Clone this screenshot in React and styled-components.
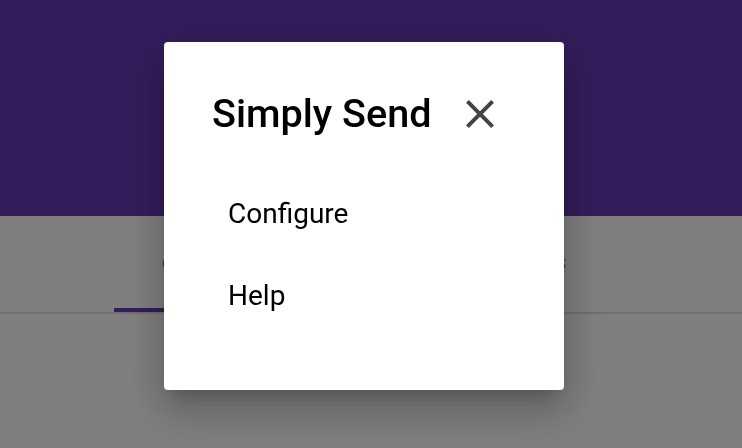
import styled, { createGlobalStyle } from 'styled-components';

const GlobalStyle = createGlobalStyle`
    body {
        margin: 0;
        font-family: Roboto, "Liberation Sans", sans-serif;
        background: #ffffff;
    }
`;

const Page = styled.div`
    position: relative;
    min-height: 100vh;
    background: #ffffff;
`;

const Header = styled.header`
    height: 216px;
    background: #6a38b6;
`;

const TabBar = styled.nav`
    display: flex;
    height: 96px;
    padding-left: 114px;
    border-bottom: 2px solid #dedede;
`;

const Tab = styled.div`
    width: ${(p) => p.width}px;
    display: flex;
    align-items: center;
    justify-content: center;
    font-size: 15px;
    font-weight: 500;
    letter-spacing: 0.5px;
    color: #757575;
    border-bottom: 4px solid ${(p) => (p.active ? '#6a38b6' : 'transparent')};
    box-sizing: border-box;
    padding-top: 4px;
`;

const Backdrop = styled.div`
    position: fixed;
    inset: 0;
    z-index: 1000;
    display: flex;
    justify-content: center;
    align-items: flex-start;
    padding: 42px 14px 0 0;
    background: rgba(0, 0, 0, 0.5);
`;

const Dialog = styled.div`
    width: 400px;
    height: 348px;
    box-sizing: border-box;
    background: #ffffff;
    border-radius: 4px;
    box-shadow: 0 11px 15px -7px rgba(0, 0, 0, 0.2), 0 24px 38px 3px rgba(0, 0, 0, 0.14),
        0 9px 46px 8px rgba(0, 0, 0, 0.12);
    padding-top: 48px;
`;

const TitleRow = styled.div`
    display: flex;
    align-items: center;
    padding-left: 48px;
    gap: 24px;
    height: 48px;
`;

const Title = styled.h2`
    margin: 0;
    font-size: 39.6px;
    font-weight: 500;
    color: #000000;
    line-height: 1;
`;

const CloseBtn = styled.button`
    border: none;
    background: none;
    padding: 0;
    width: 48px;
    height: 48px;
    display: flex;
    align-items: center;
    justify-content: center;
    cursor: pointer;
    color: #444444;
`;

const Menu = styled.ul`
    list-style: none;
    margin: 0;
    padding: 62px 0 0 64px;
    display: flex;
    flex-direction: column;
    gap: 54px;
`;

const MenuItem = styled.li`
    font-size: 28px;
    color: #000000;
    line-height: 28px;
`;

export default function App() {
    return (
        <>
            <GlobalStyle />
            <Page>
                <Header />
                <TabBar>
                    <Tab width={170} active>
                        COMPOSE
                    </Tab>
                    <Tab width={170}>HISTORY</Tab>
                    <Tab width={144}>CONTACTS</Tab>
                </TabBar>
            </Page>
            <Backdrop>
                <Dialog>
                    <TitleRow>
                        <Title>Simply Send</Title>
                        <CloseBtn aria-label="Close">
                            <svg width="48" height="48" viewBox="0 0 24 24">
                                <path
                                    fill="currentColor"
                                    d="M19 6.41 17.59 5 12 10.59 6.41 5 5 6.41 10.59 12 5 17.59 6.41 19 12 13.41 17.59 19 19 17.59 13.41 12z"
                                />
                            </svg>
                        </CloseBtn>
                    </TitleRow>
                    <Menu>
                        <MenuItem>Configure</MenuItem>
                        <MenuItem>Help</MenuItem>
                    </Menu>
                </Dialog>
            </Backdrop>
        </>
    );
}
